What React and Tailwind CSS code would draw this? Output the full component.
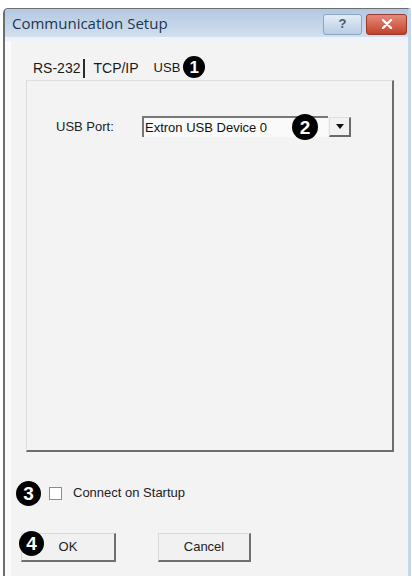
import React from 'react';

const Badge = ({ n, className = '' }) => (
  <span
    className={`flex items-center justify-center rounded-full bg-black text-white font-bold text-[17px] leading-none ${className}`}
    style={{ fontFamily: '"Liberation Sans", Arial, sans-serif' }}
  >
    {n}
  </span>
);

const WinButton = ({ children, className = '' }) => (
  <button
    className={`relative h-[29px] bg-[#f1f1f1] border-t border-l border-[#d9d9d9] border-r-2 border-b-2 border-r-[#6f6f6f] border-b-[#6f6f6f] text-[13px] text-[#222] ${className}`}
  >
    {children}
  </button>
);

export default function App() {
  return (
    <div
      className="w-[412px] h-[576px] bg-white overflow-hidden pt-[8px] pl-[3px]"
      style={{ fontFamily: '"Liberation Sans", Arial, sans-serif' }}
    >
      <div className="w-[408px] h-[580px] flex flex-col border-l-2 border-t border-[#6e6e6e] border-r-[3px] border-r-[#c3d6ea] rounded-tl-[5px] overflow-hidden">
        {/* title bar */}
        <div className="h-[28px] flex items-center justify-between pl-[7px] pr-[1px] bg-gradient-to-b from-[#b3c8e1] to-[#d2e0ef]">
          <span
            className="text-[15px] text-[#1d3550]"
            style={{ fontFamily: '"Open Sans", sans-serif' }}
          >
            Communication Setup
          </span>
          <div className="flex items-center gap-[4px] mt-[2px]">
            <div className="w-[39px] h-[21px] rounded-[3px] border border-[#8ea5c0] bg-gradient-to-b from-[#e3edf7] to-[#b9cde3] flex items-center justify-center text-[13px] font-bold text-[#44586e]">
              ?
            </div>
            <div className="w-[41px] h-[21px] rounded-[3px] border border-[#9a3a2c] bg-gradient-to-b from-[#e58a78] to-[#c2402b] flex items-center justify-center">
              <svg width="12" height="10" viewBox="0 0 12 10">
                <path d="M2 1 L10 9 M10 1 L2 9" stroke="#fff" strokeWidth="2.4" strokeLinecap="round" />
              </svg>
            </div>
          </div>
        </div>
        <div className="h-[4px] bg-[#eef3f9]" />

        {/* client area */}
        <div className="flex-1 bg-[#f3f3f3] border-l-[6px] border-l-[#fbfbfb]">
          {/* tabs */}
          <div className="mt-[15px] ml-[15px] h-[24px] flex items-center text-[14px] text-[#1a1a1a]">
            <span className="pl-[7px]">RS-232</span>
            <span className="ml-[3px] w-[2px] h-[19px] bg-[#2a2a2a]" />
            <span className="ml-[8px]">TCP/IP</span>
            <span className="ml-[15px] text-[13px]">USB</span>
            <Badge n="1" className="ml-[3px] w-[22px] h-[22px] -mt-[2px]" />
          </div>

          {/* tab page */}
          <div className="ml-[15px] w-[368px] h-[372px] border-t border-l border-[#dedede] border-r-2 border-b-2 border-r-[#6d6d6d] border-b-[#6d6d6d]">
            <div className="mt-[35px] ml-[29px] flex items-center">
              <span className="w-[86px] text-[13px] text-[#222]">USB Port:</span>
              <div className="relative flex items-center">
                <div className="w-[186px] h-[21px] bg-[#fafafa] border-t-2 border-l-2 border-[#777] flex items-center pl-[1px] text-[13px] text-[#111]">
                  Extron USB Device 0
                </div>
                <div className="ml-[1px] w-[22px] h-[20px] bg-[#f2f2f2] border-t border-l border-[#e0e0e0] border-r-2 border-b-2 border-r-[#6a6a6a] border-b-[#6a6a6a] flex items-center justify-center">
                  <svg width="8" height="5" viewBox="0 0 8 5">
                    <path d="M0 0 H8 L4 5 Z" fill="#111" />
                  </svg>
                </div>
                <Badge n="2" className="absolute left-[150px] -top-[2px] w-[26px] h-[26px] text-[19px]" />
              </div>
            </div>
          </div>

          {/* startup option */}
          <div className="mt-[28px] h-[26px] flex items-center">
            <Badge n="3" className="ml-[5px] w-[25px] h-[25px] text-[19px]" />
            <span className="ml-[8px] w-[13px] h-[13px] bg-white border border-[#8c8c8c]" />
            <span className="ml-[11px] text-[13px] text-[#222]">Connect on Startup</span>
          </div>

          {/* dialog buttons */}
          <div className="mt-[27px] flex items-center">
            <WinButton className="ml-[10px] w-[95px]">
              <Badge n="4" className="absolute -left-[3px] -top-[3px] w-[25px] h-[25px] text-[19px]" />
              OK
            </WinButton>
            <WinButton className="ml-[42px] w-[93px]">Cancel</WinButton>
          </div>
        </div>
      </div>
    </div>
  );
}
